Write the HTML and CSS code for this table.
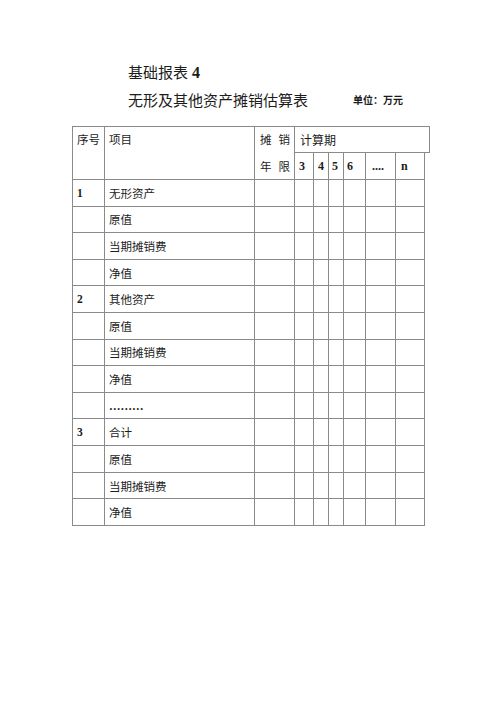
FILE: index.html
```html
<!DOCTYPE html>
<html lang="zh">
<head>
<meta charset="utf-8">
<title>基础报表 4</title>
<link rel="stylesheet" href="styles.css">
</head>
<body>
<div class="page">
  <div class="heading">
    <div class="h1">基础报表 <b class="num">4</b></div>
    <div class="h2"><span class="title">无形及其他资产摊销估算表</span><span class="unit">单位：万元</span></div>
  </div>
  <div class="grid">
    <div class="c c-no hdr">序号</div>
    <div class="c c-item hdr">项目</div>
    <div class="c c-years hdr"><span class="wide">摊销</span><span class="wide">年限</span></div>
    <div class="c c-period">计算期</div>
    <div class="c p num p3">3</div>
    <div class="c p num p4">4</div>
    <div class="c p num p5">5</div>
    <div class="c p num p6">6</div>
    <div class="c p num p7">....</div>
    <div class="c p num p8">n</div>

    <div class="c first num">1</div><div class="c">无形资产</div><div class="c"></div><div class="c"></div><div class="c"></div><div class="c"></div><div class="c"></div><div class="c"></div><div class="c"></div>
    <div class="c first"></div><div class="c">原值</div><div class="c"></div><div class="c"></div><div class="c"></div><div class="c"></div><div class="c"></div><div class="c"></div><div class="c"></div>
    <div class="c first"></div><div class="c">当期摊销费</div><div class="c"></div><div class="c"></div><div class="c"></div><div class="c"></div><div class="c"></div><div class="c"></div><div class="c"></div>
    <div class="c first"></div><div class="c">净值</div><div class="c"></div><div class="c"></div><div class="c"></div><div class="c"></div><div class="c"></div><div class="c"></div><div class="c"></div>
    <div class="c first num">2</div><div class="c">其他资产</div><div class="c"></div><div class="c"></div><div class="c"></div><div class="c"></div><div class="c"></div><div class="c"></div><div class="c"></div>
    <div class="c first"></div><div class="c">原值</div><div class="c"></div><div class="c"></div><div class="c"></div><div class="c"></div><div class="c"></div><div class="c"></div><div class="c"></div>
    <div class="c first"></div><div class="c">当期摊销费</div><div class="c"></div><div class="c"></div><div class="c"></div><div class="c"></div><div class="c"></div><div class="c"></div><div class="c"></div>
    <div class="c first"></div><div class="c">净值</div><div class="c"></div><div class="c"></div><div class="c"></div><div class="c"></div><div class="c"></div><div class="c"></div><div class="c"></div>
    <div class="c first"></div><div class="c num">………</div><div class="c"></div><div class="c"></div><div class="c"></div><div class="c"></div><div class="c"></div><div class="c"></div><div class="c"></div>
    <div class="c first num">3</div><div class="c">合计</div><div class="c"></div><div class="c"></div><div class="c"></div><div class="c"></div><div class="c"></div><div class="c"></div><div class="c"></div>
    <div class="c first"></div><div class="c">原值</div><div class="c"></div><div class="c"></div><div class="c"></div><div class="c"></div><div class="c"></div><div class="c"></div><div class="c"></div>
    <div class="c first"></div><div class="c">当期摊销费</div><div class="c"></div><div class="c"></div><div class="c"></div><div class="c"></div><div class="c"></div><div class="c"></div><div class="c"></div>
    <div class="c first"></div><div class="c">净值</div><div class="c"></div><div class="c"></div><div class="c"></div><div class="c"></div><div class="c"></div><div class="c"></div><div class="c"></div>
  </div>
</div>
</body>
</html>
```
FILE: styles.css
```css
html, body {
  margin: 0;
  padding: 0;
  background: #ffffff;
}
body {
  font-family: "Liberation Serif", "Noto Sans CJK SC", serif;
  color: #1c1c1c;
}
.page {
  padding: 59px 0 0 72px;
}
.heading {
  padding-left: 56px;
}
.h1, .h2 {
  font-size: 15px;
  line-height: 28px;
  height: 28px;
  display: flex;
  align-items: center;
}
.num {
  font-family: "Liberation Serif", serif;
  font-weight: bold;
}
.h1 .num {
  font-size: 16px;
  margin-left: 4px;
}
.title {
  width: 225px;
}
.unit {
  font-size: 10px;
  font-weight: bold;
}
.grid {
  margin-top: 11px;
  display: grid;
  width: 357px;
  grid-template-columns: 32px 150px 40px 19px 15px 15px 22px 30px 29px 5px;
  grid-template-rows: 26px 27px repeat(13, 26.62px);
  border-top: 1px solid #8a8a8a;
  border-left: 1px solid #8a8a8a;
  font-size: 11.5px;
}
.c {
  box-sizing: border-box;
  border-right: 1px solid #8a8a8a;
  border-bottom: 1px solid #8a8a8a;
  padding-left: 4px;
  display: flex;
  align-items: center;
  white-space: nowrap;
  min-width: 0;
}
.first {
  grid-column: 1;
}
.hdr {
  grid-row: 1 / 3;
  align-items: flex-start;
  line-height: 26px;
}
.c-no { grid-column: 1; }
.c-item { grid-column: 2; }
.c-years {
  grid-column: 3;
  flex-direction: column;
  padding-left: 5px;
  line-height: 26.5px;
}
.wide {
  letter-spacing: 7px;
}
.c-period {
  grid-row: 1;
  grid-column: 4 / 11;
  padding-left: 5px;
  font-size: 12px;
}
.p {
  grid-row: 2;
  font-size: 12px;
}
.p3 { grid-column: 4; padding-left: 4px; }
.p4 { grid-column: 5; padding-left: 4px; }
.p5 { grid-column: 6; padding-left: 3px; }
.p6 { grid-column: 7; padding-left: 3px; }
.p7 { grid-column: 8; padding-left: 6px; }
.p8 { grid-column: 9; padding-left: 5px; }
```
